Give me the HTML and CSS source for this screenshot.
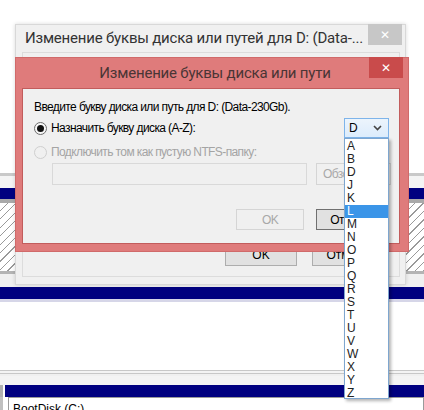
FILE: index.html
```html
<!DOCTYPE html>
<html>
<head>
<meta charset="utf-8">
<link rel="stylesheet" href="styles.css">
</head>
<body>
<div class="desk">
  <div class="band top"></div>
  <div class="band line1"></div>
  <div class="band light1"></div>
  <div class="band navy"></div>
  <div class="band grey1"></div>
  <div class="band hatch"></div>
  <div class="band grey2"></div>
  <div class="band light2"></div>
  <div class="band navy b2"></div>
  <div class="band line3"></div>
  <div class="band white2"></div>
  <div class="band grey3"></div>
  <div class="band light3"></div>
  <div class="row-navy"><div class="stub"></div><div class="navy2"></div></div>
  <div class="row-boot"><div class="stub2"></div><div class="boot">BootDisk (C:)</div></div>
</div>

<div class="outer">
  <div class="outer-title">
    <span class="otext">Изменение буквы диска или путей для D: (Data-...</span>
    <div class="close grey">✕</div>
  </div>
  <div class="outer-body">
    <div class="outer-buttons">
      <div class="btn">OK</div>
      <div class="btn">Отмена</div>
    </div>
  </div>
</div>

<div class="red">
  <div class="red-title">
    <span class="rtext">Изменение буквы диска или пути</span>
    <div class="close redc">✕</div>
  </div>
  <div class="red-body">
    <div class="lead">Введите букву диска или путь для D: (Data-230Gb).</div>
    <div class="radio-row">
      <span class="radio on"></span><span>Назначить букву диска (A-Z):</span>
    </div>
    <div class="radio-row dis">
      <span class="radio"></span><span>Подключить том как пустую NTFS-папку:</span>
    </div>
    <div class="path-row">
      <div class="path-input"></div>
      <div class="btn dis-btn small">Обзор...</div>
    </div>
    <div class="red-buttons">
      <div class="btn dis-btn">OK</div>
      <div class="btn">Отмена</div>
    </div>
  </div>
</div>

<div class="combo">
  <span>D</span>
  <svg width="9" height="6" viewBox="0 0 9 6"><path d="M1 1 L4.5 4.5 L8 1" fill="none" stroke="#444" stroke-width="1.6"/></svg>
</div>
<ul class="list">
  <li>A</li><li>B</li><li>D</li><li>J</li><li>K</li><li class="sel">L</li><li>M</li><li>N</li><li>O</li><li>P</li><li>Q</li><li>R</li><li>S</li><li>T</li><li>U</li><li>V</li><li>W</li><li>X</li><li>Y</li><li>Z</li>
</ul>
</body>
</html>
```

FILE: styles.css
```css
* { box-sizing: border-box; }
html, body { margin: 0; padding: 0; }
body {
  width: 424px;
  height: 410px;
  overflow: hidden;
  background: #fff;
  font-family: "Liberation Sans", Arial, sans-serif;
  position: relative;
}
.desk { display: flex; flex-direction: column; }
.band { width: 100%; }
.top { height: 173px; background: #fff; }
.line1 { height: 3px; background: #c9c9c9; }
.light1 { height: 12px; background: #f4f4f4; }
.navy { height: 11px; background: #000080; }
.navy.b2 { height: 12px; }
.grey1 { height: 4px; background: #a9a9a9; }
.hatch {
  height: 68px;
  background: repeating-linear-gradient(135deg, #fff 0 5px, #9a9a9a 5px 6px);
}
.grey2 { height: 3px; background: #b4b4b4; }
.light2 { height: 13px; background: #f0f0f0; }
.line3 { height: 3px; background: #d6d6e8; }
.white2 { height: 68px; background: #fff; }
.grey3 { height: 6px; background: linear-gradient(#c8c8c8 0 1px, #f4f4f4 1px 3px, #c8c8c8 3px 4px, #f0f0f0 4px); }
.light3 { height: 9px; background: #f4f4f4; }
.row-navy { display: flex; height: 12px; }
.stub { width: 3px; background: #b0b0b0; margin-right: 2px; }
.navy2 { flex: 1; background: #000080; }
.row-boot { display: flex; height: 13px; }
.stub2 { width: 3px; background: #c0c0c0; margin-right: 5px; }
.boot {
  flex: 1;
  border: 1px solid #9a9a9a;
  border-bottom: none;
  background: #fff;
  font-size: 12px;
  padding: 5px 0 0 4px;
  line-height: 12px;
  color: #000;
}

/* outer dialog */
.outer {
  position: absolute;
  left: 15px;
  top: 24px;
  width: 391px;
  height: 261px;
  background: #f0f0f0;
  border: 1px solid #d8d8d8;
  box-shadow: 0 0 4px rgba(0,0,0,0.15);
  display: flex;
  flex-direction: column;
}
.outer-title {
  height: 27px;
  display: flex;
  align-items: flex-start;
  padding-left: 9px;
  position: relative;
}
.otext {
  font-family: Roboto, "Noto Sans", sans-serif;
  font-size: 15px;
  color: #333;
  line-height: 27px;
  letter-spacing: -0.2px;
  white-space: nowrap;
}
.close {
  position: absolute;
  right: 3px;
  top: 0;
  width: 34px;
  height: 21px;
  color: #fff;
  font-size: 12px;
  font-weight: bold;
  display: flex;
  align-items: center;
  justify-content: center;
  font-family: "DejaVu Sans", sans-serif;
}
.grey { background: #c7c7c7; top: -1px; }
.outer-body {
  flex: 1;
  margin: 0 5px 7px 6px;
  border: 1px solid #dcdcdc;
  display: flex;
  flex-direction: column;
  justify-content: flex-end;
}
.outer-buttons {
  display: flex;
  gap: 15px;
  padding: 0 0 10px 202px;
}
.btn {
  width: 72px;
  height: 22px;
  border: 1px solid #adadad;
  background: #e1e1e1;
  font-size: 12px;
  display: flex;
  align-items: center;
  justify-content: center;
  color: #000;
}

/* red dialog */
.red {
  position: absolute;
  left: 15px;
  top: 57px;
  width: 394px;
  height: 195px;
  background: #df7b7b;
  border: 1px solid #d06a6a;
  display: flex;
  flex-direction: column;
}
.red-title {
  height: 30px;
  position: relative;
  display: flex;
  justify-content: center;
}
.rtext {
  font-family: Roboto, "Noto Sans", sans-serif;
  font-size: 15px;
  color: #4a3535;
  line-height: 30px;
  letter-spacing: -0.2px;
  margin-left: 6px;
}
.redc { background: #c94b4b; top: -1px; right: 5px; height: 21px; }
.red-body {
  flex: 1;
  margin: 0 8px 7px 6px;
  background: #f0f0f0;
  border: 1px solid #c25c5c;
  padding: 12px 0 0 11px;
  font-size: 12px;
  color: #000;
  letter-spacing: -0.6px;
  display: flex;
  flex-direction: column;
}
.lead { height: 13px; line-height: 13px; }
.radio-row {
  display: flex;
  align-items: center;
  gap: 4px;
  height: 14px;
  margin-top: 7px;
}
.radio-row + .radio-row { margin-top: 10px; }
.radio {
  width: 13px;
  height: 13px;
  border-radius: 50%;
  border: 1px solid #6d6d6d;
  background: #f7f7f7;
  display: inline-flex;
  align-items: center;
  justify-content: center;
}
.radio.on::after {
  content: "";
  width: 7px;
  height: 7px;
  border-radius: 50%;
  background: #111;
}
.dis { color: #a4a4a4; }
.dis .radio { border-color: #cfcfcf; background: #f0f0f0; }
.path-row {
  display: flex;
  gap: 9px;
  margin: 4px 0 0 18px;
}
.path-input {
  width: 255px;
  height: 22px;
  border: 1px solid #d9d9d9;
  background: #f0f0f0;
}
.dis-btn {
  color: #a8a8a8;
  border-color: #d5d5d5;
  background: #f0f0f0;
}
.small { width: 75px; justify-content: flex-start; padding-left: 6px; }
.red-buttons {
  display: flex;
  gap: 12px;
  margin: 24px 0 0 202px;
}
.red-buttons .btn { width: 68px; height: 21px; }
.red-buttons .btn:last-child { border-color: #707070; }

/* combo + list */
.combo {
  position: absolute;
  left: 344px;
  top: 118px;
  width: 45px;
  height: 20px;
  border: 1px solid #7eb4ea;
  background: linear-gradient(#ecf4fc, #dcecfc);
  display: flex;
  align-items: center;
  justify-content: space-between;
  padding: 0 6px 0 4px;
  font-size: 12px;
}
.list {
  position: absolute;
  left: 344px;
  top: 138px;
  width: 45px;
  height: 261px;
  margin: 0;
  padding: 1px 0 0 0;
  list-style: none;
  background: #fff;
  border: 1px solid #7ea6cf;
  box-shadow: 2px 2px 3px rgba(0,0,0,0.3);
}
.list li {
  height: 13px;
  line-height: 13px;
  font-size: 12px;
  padding-left: 2px;
  color: #222;
}
.list li.sel { background: #3b95e8; color: #fff; }
```
